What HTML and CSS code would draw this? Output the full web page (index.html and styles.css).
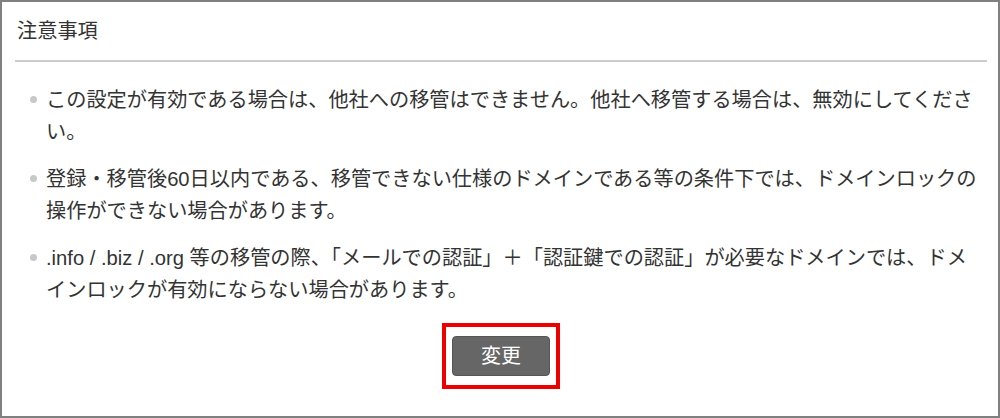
FILE: index.html
```html
<!DOCTYPE html>
<html lang="ja">
<head>
<meta charset="utf-8">
<title>注意事項</title>
<link rel="stylesheet" href="styles.css">
</head>
<body>
<section class="panel">
  <h2 class="panel-title">注意事項</h2>
  <ul class="notes">
    <li>この設定が有効である場合は、他社への移管はできません。他社へ移管する場合は、無効にしてください。</li>
    <li>登録・移管後60日以内である、移管できない仕様のドメインである等の条件下では、ドメインロックの操作ができない場合があります。</li>
    <li>.info / .biz / .org 等の移管の際、「メールでの認証」＋「認証鍵での認証」が必要なドメインでは、ドメインロックが有効にならない場合があります。</li>
  </ul>
  <div class="actions">
    <div class="highlight">
      <button class="btn" type="button">変更</button>
    </div>
  </div>
</section>
</body>
</html>
```

FILE: styles.css
```css
html, body {
  margin: 0;
  padding: 0;
  background: #ffffff;
}

body {
  font-family: "Liberation Sans", "Noto Sans CJK JP", sans-serif;
  color: #333333;
}

.panel {
  box-sizing: border-box;
  width: 1000px;
  height: 418px;
  border: 2px solid #808080;
  padding: 0 11px 0 13px;
}

.panel-title {
  margin: 0;
  padding: 14px 0 14px 2px;
  font-size: 20.2px;
  line-height: 30px;
  font-weight: normal;
  color: #333333;
  border-bottom: 2px solid #cccccc;
}

.notes {
  list-style: none;
  margin: 22px 0 0 0;
  padding: 0 2px 0 31px;
  font-size: 20.2px;
  line-height: 32px;
}

.notes li {
  position: relative;
}

.notes li + li {
  margin-top: 15px;
}

.notes li::before {
  content: "";
  position: absolute;
  left: -16px;
  top: 12px;
  width: 7px;
  height: 7px;
  border-radius: 50%;
  background: #c8c8c8;
}

.actions {
  display: flex;
  justify-content: center;
  margin-top: 17px;
}

.highlight {
  border: 4px solid #ee0000;
  padding: 9px 6px;
  display: flex;
}

.btn {
  width: 98px;
  height: 40px;
  margin: 0;
  padding: 0;
  border: 1px solid #555555;
  border-radius: 4px;
  background: #666666;
  color: #ffffff;
  font-family: "Liberation Sans", "Noto Sans CJK JP", sans-serif;
  font-size: 20px;
  line-height: 38px;
  cursor: pointer;
}
```
